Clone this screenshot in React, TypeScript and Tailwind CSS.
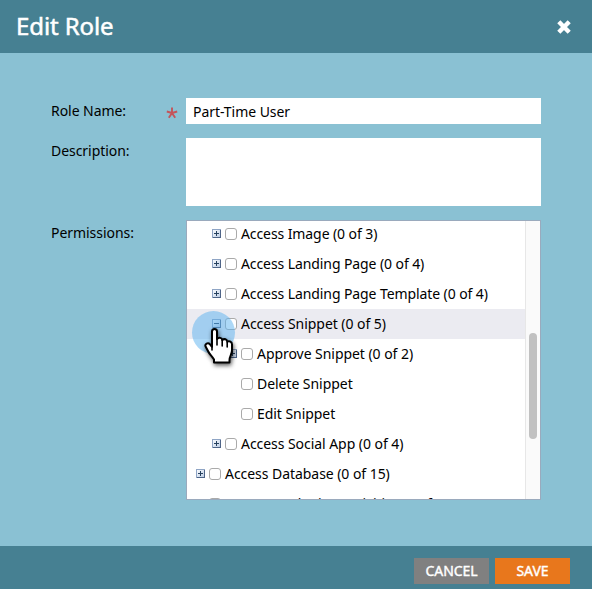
import { useState } from "react";

type Item = { label: string; depth: number; toggle?: "plus" | "minus"; active?: boolean; tight?: boolean };

const items: Item[] = [
  { label: "Access Image (0 of 3)", depth: 1, toggle: "plus", tight: true },
  { label: "Access Landing Page (0 of 4)", depth: 1, toggle: "plus", tight: true },
  { label: "Access Landing Page Template (0 of 4)", depth: 1, toggle: "plus", tight: true },
  { label: "Access Snippet (0 of 5)", depth: 1, toggle: "minus", active: true },
  { label: "Approve Snippet (0 of 2)", depth: 2, toggle: "plus" },
  { label: "Delete Snippet", depth: 2 },
  { label: "Edit Snippet", depth: 2 },
  { label: "Access Social App (0 of 4)", depth: 1, toggle: "plus" },
  { label: "Access Database (0 of 15)", depth: 0, toggle: "plus" },
  { label: "Access Marketing Activities (0 of 11)", depth: 0, toggle: "plus", tight: true },
];

const indents = ["pl-[9px]", "pl-[25px]", "pl-[41px]"];

function Toggle({ kind }: { kind?: "plus" | "minus" }) {
  if (!kind) return <span className="w-[9px] shrink-0" />;
  return (
    <svg className="-mt-px h-[9px] w-[9px] shrink-0" viewBox="0 0 9 9" shapeRendering="crispEdges">
      <defs>
        <linearGradient id="toggle-fill" x1="0" y1="0" x2="1" y2="1">
          <stop offset="0" stopColor="#ffffff" />
          <stop offset="1" stopColor="#b9cbe4" />
        </linearGradient>
      </defs>
      <rect x=".5" y=".5" width="8" height="8" fill="url(#toggle-fill)" stroke="#8fa5c5" />
      <path d="M8.5 1v7.5H1" fill="none" stroke="#4e6487" />
      <path d="M2 4.5h5" stroke="#27415f" />
      {kind === "plus" && <path d="M4.500 2v5" stroke="#27415f" />}
    </svg>
  );
}

function Row({ item }: { item: Item }) {
  return (
    <div className={`flex h-[30px] items-center ${indents[item.depth]} ${item.active ? "bg-[#ebebf1]" : ""}`}>
      <Toggle kind={item.toggle} />
      <span className="ml-1 size-3 shrink-0 rounded-[3px] border border-[#aaaaaa] bg-white" />
      <span className={`ml-1 whitespace-nowrap ${item.tight ? "tracking-[-0.09px]" : ""}`}>{item.label}</span>
    </div>
  );
}

function Pointer() {
  return (
    <div className="pointer-events-none absolute left-[5px] top-[90px] h-[64px] w-[50px]">
      <div className="absolute left-0 top-0 size-[43px] rounded-full bg-[#5ab2f0]/50" />
      <svg className="absolute left-[10px] top-[14px] h-[46px] w-[38px] overflow-visible" viewBox="0 0 38 46">
        <path
          className="drop-shadow-[1px_2px_2px_rgba(0,0,0,0.65)]"
          d="M10 21V6.500C10 3 15 3 15 6.500V14C17 11.800 20 12.800 20.300 15C22.300 13.300 25 14.300 25.300 16.700C27.300 15.400 30 16.800 30 19.500V25C30 29.500 27.500 31 27.500 35V37.500H12V34.500C10 31 7.500 29.500 6 26L3.700 21.800C2.300 18.800 6 17 8 19.300L10 21.800Z"
          fill="white"
          stroke="black"
          strokeWidth="2"
          strokeLinejoin="round"
        />
        <path d="M10 20V25M15 13V20M20.200 15V21M25.200 17V22" stroke="black" strokeWidth="1.600" strokeLinecap="round" />
      </svg>
    </div>
  );
}

export default function App() {
  const [name, setName] = useState("Part-Time User");
  return (
    <div className="flex h-[589px] w-[592px] flex-col bg-[#8ac1d3] font-['Noto_Sans',sans-serif] text-[14px] leading-5 tracking-[-0.05px] text-black">
      <header className="flex h-[53px] items-center justify-between bg-[#468092] pl-4 pr-[20px] text-white">
        <h1 className="-mt-[2px] text-[24px] font-normal leading-8 tracking-[-0.1px] [-webkit-text-stroke:0.5px_white]">
          Edit Role
        </h1>
        <svg className="h-4 w-4" viewBox="0 0 16 16">
          <path d="M2.800 2.800l10.400 10.400M13.200 2.800l-10.400 10.400" stroke="white" strokeWidth="4.400" />
        </svg>
      </header>
      <main className="flex flex-1 flex-col gap-[14px] pl-[51px] pt-[45px]">
        <div className="flex h-[26px]">
          <label className="w-[115px] pt-[3px]">Role Name:</label>
          <span className="flex w-5 items-center pt-1">
            <svg className="h-3 w-3" viewBox="0 0 12 12">
              <path d="M6 6V.5M6 6L.8 4.500M6 6l5.200-1.500M6 6l-3.200 4.800M6 6l3.200 4.800" stroke="#c4545a" strokeWidth="1.900" />
            </svg>
          </span>
          <input
            value={name}
            onChange={(e) => setName(e.target.value)}
            className="h-[26px] w-[355px] bg-white px-[7px] pt-px tracking-[-0.05px] outline-none"
          />
        </div>
        <div className="flex h-[68px]">
          <label className="w-[135px] pt-[3px]">Description:</label>
          <textarea className="h-[68px] w-[355px] resize-none bg-white p-[7px] outline-none" />
        </div>
        <div className="flex h-[280px]">
          <label className="w-[135px] pt-[3px]">Permissions:</label>
          <div className="relative flex h-[280px] w-[355px] overflow-hidden border border-[#9aaabd] bg-white">
            <div className="-mt-[2px] w-[338px] shrink-0">
              {items.map((item) => (
                <Row key={item.label} item={item} />
              ))}
            </div>
            <div className="flex w-[15px] justify-center border-l border-[#e7e7e7] bg-[#fafafa]">
              <div className="mt-[112px] h-[106px] w-2 rounded-full bg-[#c1c1c1]" />
            </div>
            <Pointer />
          </div>
        </div>
      </main>
      <footer className="flex h-[43px] justify-end gap-[6px] bg-[#468092] pr-[22px] pt-3 text-white">
        <button className="h-[26px] w-[75px] bg-[#808080] [-webkit-text-stroke:0.4px_white]">CANCEL</button>
        <button className="h-[26px] w-[75px] bg-[#e8771c] [-webkit-text-stroke:0.4px_white]">SAVE</button>
      </footer>
    </div>
  );
}
